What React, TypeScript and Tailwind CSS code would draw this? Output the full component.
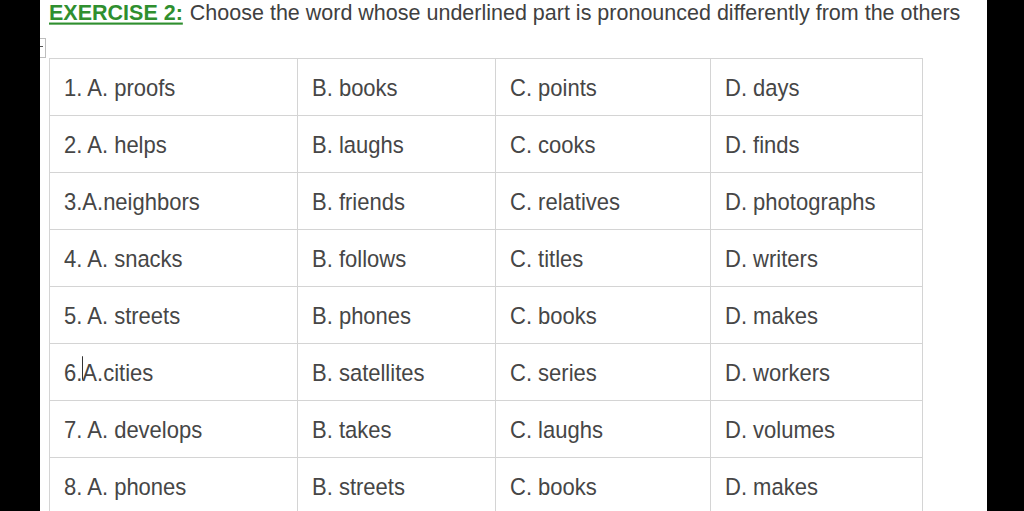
const rows: string[][] = [
  ["1. A. proofs", "B. books", "C. points", "D. days"],
  ["2. A. helps", "B. laughs", "C. cooks", "D. finds"],
  ["3.A.neighbors", "B. friends", "C. relatives", "D. photographs"],
  ["4. A. snacks", "B. follows", "C. titles", "D. writers"],
  ["5. A. streets", "B. phones", "C. books", "D. makes"],
  ["6.A.cities", "B. satellites", "C. series", "D. workers"],
  ["7. A. develops", "B. takes", "C. laughs", "D. volumes"],
  ["8. A. phones", "B. streets", "C. books", "D. makes"],
];

const colWidths = ["w-[248px]", "w-[198px]", "w-[215px]", "w-[212px]"];

const Cell = ({ text, col }: { text: string; col: number }) => {
  // row 6 has the text cursor sitting after "6."
  if (text === "6.A.cities") {
    return (
      <td className={`${colWidths[col]} h-[57px] border border-[#d4d4d4] pl-[14px] align-middle`}>
        <span className="relative inline-block scale-y-[1.12]">
          6.
          <span className="absolute left-[18px] top-[2px] h-[21px] w-px bg-[#333]" />
          A.cities
        </span>
      </td>
    );
  }
  return (
    <td className={`${colWidths[col]} h-[57px] border border-[#d4d4d4] pl-[14px] align-middle`}>
      <span className="inline-block scale-y-[1.12]">{text}</span>
    </td>
  );
};

const App = () => {
  return (
    <div className="flex h-[511px] w-[1024px] overflow-hidden bg-black font-['Liberation_Sans',Arial,sans-serif]">
      <div className="w-[40px] shrink-0 bg-black" />
      <div className="flex w-[947px] shrink-0 flex-col bg-white">
        <div className="flex h-[38px] shrink-0 items-start whitespace-nowrap pl-[9px] pt-[1px] text-[21.5px] leading-[24px] text-[#404040]">
          <span className="inline-block scale-y-[1.06] font-bold text-[#2f8f2f] underline decoration-[2px] underline-offset-[2px]">
            EXERCISE 2:
          </span>
          <span className="ml-[7px] inline-block scale-y-[1.06]">
            Choose the word whose underlined part is pronounced differently from the others
          </span>
        </div>
        <div className="flex shrink-0">
          <div className="h-[20px] w-[6px] border border-l-0 border-[#bdbdbd] bg-white">
            <div className="mt-[7px] h-px w-[3px] bg-[#555]" />
          </div>
        </div>
        <table className="ml-[9px] w-[873px] shrink-0 table-fixed border-collapse text-[22px] text-[#464646]">
          <tbody>
            {rows.map((r, i) => (
              <tr key={i}>
                {r.map((c, j) => (
                  <Cell key={j} text={c} col={j} />
                ))}
              </tr>
            ))}
          </tbody>
        </table>
      </div>
      <div className="flex-1 bg-black" />
    </div>
  );
};

export default App;
